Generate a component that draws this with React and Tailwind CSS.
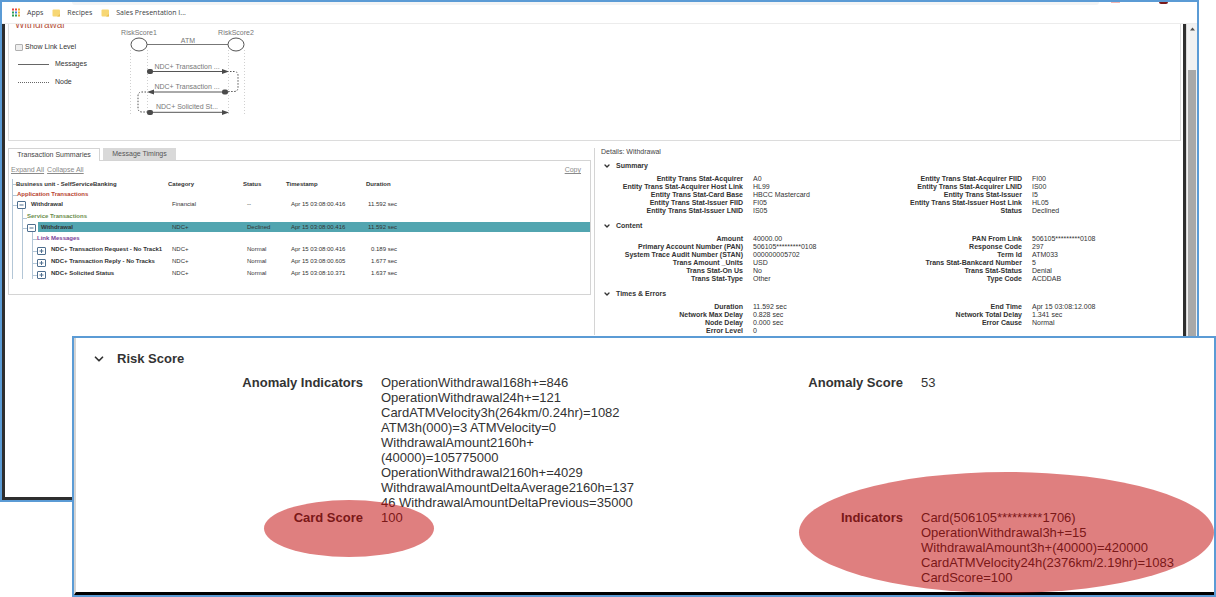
import { ChevronDown } from 'lucide-react';

const bookmarks = ['Recipes', 'Sales Presentation I...'];

const detailSections = [
  {
    title: 'Summary',
    left: [
      ['Entity Trans Stat-Acquirer', 'A0'],
      ['Entity Trans Stat-Acquirer Host Link', 'HL99'],
      ['Entity Trans Stat-Card Base', 'HBCC Mastercard'],
      ['Entity Trans Stat-Issuer FIID', 'FI05'],
      ['Entity Trans Stat-Issuer LNID', 'IS05'],
    ],
    right: [
      ['Entity Trans Stat-Acquirer FIID', 'FI00'],
      ['Entity Trans Stat-Acquirer LNID', 'IS00'],
      ['Entity Trans Stat-Issuer', 'I5'],
      ['Entity Trans Stat-Issuer Host Link', 'HL05'],
      ['Status', 'Declined'],
    ],
  },
  {
    title: 'Content',
    left: [
      ['Amount', '40000.00'],
      ['Primary Account Number (PAN)', '506105*********0108'],
      ['System Trace Audit Number (STAN)', '000000005702'],
      ['Trans Amount _Units', 'USD'],
      ['Trans Stat-On Us', 'No'],
      ['Trans Stat-Type', 'Other'],
    ],
    right: [
      ['PAN From Link', '506105*********0108'],
      ['Response Code', '297'],
      ['Term Id', 'ATM033'],
      ['Trans Stat-Bankcard Number', '5'],
      ['Trans Stat-Status', 'Denial'],
      ['Type Code', 'ACDDAB'],
    ],
  },
  {
    title: 'Times & Errors',
    left: [
      ['Duration', '11.592 sec'],
      ['Network Max Delay', '0.828 sec'],
      ['Node Delay', '0.000 sec'],
      ['Error Level', '0'],
    ],
    right: [
      ['End Time', 'Apr 15 03:08:12.008'],
      ['Network Total Delay', '1.341 sec'],
      ['Error Cause', 'Normal'],
    ],
  },
];

// heading rows only carry a coloured group name
const rows = [
  { level: 1, heading: 'Application Transactions', color: 'text-[#b8432f]', height: 'h-[10px]' },
  { level: 1, name: 'Withdrawal', open: true, cells: ['Financial', '--', 'Apr 15 03:08:00.416', '11.592 sec'], height: 'h-[10px]' },
  { level: 2, heading: 'Service Transactions', color: 'text-[#6b8e4e]', height: 'h-[13px]' },
  { level: 2, name: 'Withdrawal', open: true, selected: true, cells: ['NDC+', 'Declined', 'Apr 15 03:08:00.416', '11.592 sec'], height: 'h-[10px]' },
  { level: 3, heading: 'Link Messages', color: 'text-[#7b3f98]', height: 'h-[11px]' },
  { level: 3, name: 'NDC+ Transaction Request - No Track1', cells: ['NDC+', 'Normal', 'Apr 15 03:08:00.416', '0.189 sec'], height: 'h-[12px]' },
  { level: 3, name: 'NDC+ Transaction Reply - No Tracks', cells: ['NDC+', 'Normal', 'Apr 15 03:08:00.605', '1.677 sec'], height: 'h-[12px]' },
  { level: 3, name: 'NDC+ Solicited Status', cells: ['NDC+', 'Normal', 'Apr 15 03:08:10.371', '1.637 sec'], height: 'h-[12px]' },
];

function BookmarkBar() {
  return (
    <header className="relative flex h-[22px] items-center border-b border-[#ececec] pl-[9px] text-[7px] leading-[8px] text-[#3c4043] font-['Open_Sans','Noto_Sans',sans-serif]">
      {/* lower edge of the address bar and toolbar icons */}
      <div className="absolute top-0 left-[70px] right-[98px] h-[3px] rounded-b-full bg-[#f3f4f5]" />
      <div className="absolute top-0 right-[77px] h-px w-[9px] bg-[#f3b5b0]" />
      <div className="absolute top-0 right-[29px] h-[2px] w-[9px] rounded-b-full bg-[#7a1a1a]" />
      <a href="#apps" className="flex items-center gap-[6px]">
        <svg width="10" height="9" viewBox="0 0 10 9" aria-hidden="true">
          {['#e8453c', '#e8453c', '#f4a32a', '#2f9e57', '#3f7de0', '#f4b82a', '#2f9e57', '#2f9e57', '#e8a32a'].map((c, i) => (
            <rect key={i} x={(i % 3) * 3 + 1} y={Math.floor(i / 3) * 3 + 0.5} width="2" height="2" fill={c} />
          ))}
        </svg>
        Apps
      </a>
      {bookmarks.map(b => (
        <a key={b} href="#bookmark" className="ml-[9px] flex items-center gap-[6px]">
          <svg width="9" height="8" viewBox="0 0 9 8" aria-hidden="true">
            <rect x="0.5" y="0.5" width="7.5" height="7" rx="1" fill="#f7d774" />
            <path d="M5 7.5h3V5z" fill="#e8bf52" />
          </svg>
          {b}
        </a>
      ))}
    </header>
  );
}

function Diagram() {
  return (
    <svg width="150" height="96" viewBox="115 26 150 96" fill="none" className="text-[7px]" role="img" aria-label="Message flow">
      <g stroke="#d0d0d0" strokeDasharray="1 2">
        <path d="M130.5 50v64M147.5 50v64M228.5 50v64M244.5 50v64" />
      </g>
      <g stroke="#555555">
        <path d="M147 44.5h81" stroke="#777777" />
        <ellipse cx="139" cy="44.5" rx="8" ry="6.5" fill="#fff" />
        <ellipse cx="236" cy="44.5" rx="8" ry="6.5" fill="#fff" />
        <path d="M150 71.5h73M154 92h71M150 112.3h73" />
        <path d="M230 71.5h4q4 0 4 4v12q0 4-4 4h-6" strokeDasharray="1.5 1.5" />
        <path d="M146 92h-4q-4 0-4 4v12q0 4 4 4h6" strokeDasharray="1.5 1.5" />
      </g>
      <g fill="#4a4a4a">
        <rect x="147" y="69" width="6" height="5" rx="2" />
        <rect x="222" y="89.5" width="6" height="5" rx="2" />
        <rect x="147" y="110" width="6" height="5" rx="2" />
        <path d="M222 69l7 2.5-7 2.5zM154 89.5l-7 2.5 7 2.5zM222 110l7 2.5-7 2.5z" />
      </g>
      <g fill="#777777">
        <text x="139" y="35" textAnchor="middle">RiskScore1</text>
        <text x="236" y="35" textAnchor="middle">RiskScore2</text>
        <text x="188" y="43" textAnchor="middle">ATM</text>
        <text x="187" y="69" textAnchor="middle">NDC+ Transaction ...</text>
        <text x="187" y="89" textAnchor="middle">NDC+ Transaction ...</text>
        <text x="187" y="109" textAnchor="middle">NDC+ Solicited St...</text>
      </g>
    </svg>
  );
}

function OverviewPanel() {
  return (
    <section className="flex h-[117px] overflow-hidden border border-t-0 border-[#dcdcdc]">
      <div className="w-[106px] pl-[6px]">
        <h2 className="-mt-[4px] text-[10px] leading-[10px] text-[#b8573f]">Withdrawal</h2>
        <label className="mt-[13px] flex items-center gap-[2px]">
          <input type="checkbox" className="h-[7px] w-[8px] appearance-none rounded-[1px] border border-[#b0b0b0] bg-[#eeeeee]" />
          Show Link Level
        </label>
        <div className="mt-[9px] flex items-center gap-[6px] pl-[3px]">
          <span className="w-[31px] border-t border-[#666666]" />
          Messages
        </div>
        <div className="mt-[10px] flex items-center gap-[6px] pl-[3px]">
          <span className="w-[31px] border-t border-dotted border-[#666666]" />
          Node
        </div>
      </div>
      <div className="pt-[2px]">
        <Diagram />
      </div>
    </section>
  );
}

function Toggle({ open, label }) {
  return (
    <button type="button" aria-label={label} aria-expanded={!!open} className="shrink-0 self-end">
      <svg width="9" height="8" viewBox="0 0 9 8" fill="none" stroke="#4f6f8f">
        <rect x="0.5" y="0.5" width="8" height="7" rx="0.5" fill="#fff" />
        <path d={open ? 'M2.5 4h4' : 'M2.5 4h4M4.5 2v4'} />
      </svg>
    </button>
  );
}

function TreeRow({ row }) {
  const bg = row.selected ? 'bg-[#52a5b0]' : '';
  return (
    <tr className={row.height}>
      <td className="p-0" colSpan={row.heading ? 6 : 1}>
        <div className={`flex ${row.height}`}>
          {row.level > 1 && <span className="w-[10px] shrink-0 border-l border-[#b3c6d6]" />}
          {row.level > 2 && <span className="w-[10px] shrink-0 border-l border-[#b3c6d6]" />}
          <span className="flex w-[5px] shrink-0 items-end border-l border-[#b3c6d6] pb-[3px]">
            <span className="w-full border-t border-[#b3c6d6]" />
          </span>
          {row.heading ? (
            <span className={`self-center font-bold ${row.color}`}>{row.heading}</span>
          ) : (
            <>
              <Toggle open={row.open} label={row.name} />
              <span className={`ml-[2px] flex flex-1 items-center pl-[3px] font-bold whitespace-nowrap ${bg}`}>{row.name}</span>
            </>
          )}
        </div>
      </td>
      {row.cells && (
        <>
          <td className={`p-0 pl-[4px] ${bg}`}>{row.cells[0]}</td>
          <td className={`p-0 pl-[4px] ${bg}`}>{row.cells[1]}</td>
          <td className={`p-0 pl-[5px] ${bg}`}>{row.cells[2]}</td>
          <td className={`p-0 text-right whitespace-nowrap ${bg}`}>{row.cells[3]}</td>
          <td className={`p-0 ${bg}`} />
        </>
      )}
    </tr>
  );
}

function TransactionPanel() {
  return (
    <section className="w-[583px] shrink-0">
      <div role="tablist" className="flex gap-[3px]">
        <button type="button" role="tab" aria-selected="true" className="relative z-10 -mb-px h-[13px] w-[92px] border border-b-0 border-[#d4d4d4] bg-white text-[#444444]">
          Transaction Summaries
        </button>
        <button type="button" role="tab" aria-selected="false" className="h-[12px] w-[73px] bg-[#d9d9d9] text-[#555555]">
          Message Timings
        </button>
      </div>
      <div className="border border-[#d4d4d4] pt-[5px] pb-[15px]">
        <div className="flex gap-[3px] pr-[9px] pl-[2px] text-[#8a8a8a]">
          <button type="button" className="underline">Expand All</button>
          <button type="button" className="underline">Collapse All</button>
          <button type="button" className="ml-auto underline">Copy</button>
        </div>
        <div className="mt-[5px] pl-[3px]">
          <table className="w-full table-fixed border-collapse text-left text-[6px] leading-[8px]">
            <colgroup>
              <col className="w-[156px]" />
              <col className="w-[75px]" />
              <col className="w-[43px]" />
              <col className="w-[80px]" />
              <col className="w-[31px]" />
              <col />
            </colgroup>
            <thead>
              <tr className="h-[10px]">
                <th className="p-0">
                  <div className="flex h-[10px] items-center border-l border-[#b3c6d6]">
                    <span className="w-[3px] border-t border-[#b3c6d6]" />
                    Business unit - SelfServiceBanking
                  </div>
                </th>
                <th className="p-0">Category</th>
                <th className="p-0">Status</th>
                <th className="p-0">Timestamp</th>
                <th className="p-0">Duration</th>
                <th className="p-0" />
              </tr>
            </thead>
            <tbody>
              {rows.map((r, i) => <TreeRow key={i} row={r} />)}
            </tbody>
          </table>
        </div>
      </div>
    </section>
  );
}

function DetailList({ items }) {
  return (
    <dl>
      {items.map(([label, value]) => (
        <div key={label} className="flex gap-[10px]">
          <dt className="w-[148px] shrink-0 text-right font-bold">{label}</dt>
          <dd>{value}</dd>
        </div>
      ))}
    </dl>
  );
}

function DetailsPanel() {
  return (
    <section className="ml-[3px] flex-1 border-l border-[#d4d4d4] pr-[28px]">
      <h2 className="pl-[6px] leading-[7px] text-[#444444]">Details: Withdrawal</h2>
      {detailSections.map(s => (
        <div key={s.title} className="mt-[7px]">
          <button type="button" className="flex items-center gap-[5px] pl-[8px] font-bold">
            <ChevronDown size={8} strokeWidth={4} />
            {s.title}
          </button>
          <div className="mt-[5px] grid grid-cols-2">
            <DetailList items={s.left} />
            <DetailList items={s.right} />
          </div>
        </div>
      ))}
    </section>
  );
}

function BrowserWindow() {
  return (
    <div className="mr-[17px] border-2 border-[#5b9bd5] bg-white">
      <BookmarkBar />
      <div className="flex">
        <main className="flex-1 border-r-[3px] border-b-[3px] border-l-[3px] border-[#2e2e2e] pr-[2px] pb-[162px] pl-[3px] text-[7px] leading-[8px]">
          <OverviewPanel />
          <div className="mt-[7px] flex">
            <TransactionPanel />
            <DetailsPanel />
          </div>
        </main>
        <div className="flex w-[11px] flex-col items-center border-l border-[#d8d8d8] bg-[#f1f1f1]">
          <svg width="5" height="4" viewBox="0 0 5 4" className="mt-[3px] mb-[39px] shrink-0" aria-hidden="true">
            <path d="M0 3.5L2.5 0.5 5 3.5z" fill="#505050" />
          </svg>
          <div className="w-[8px] flex-1 bg-[#a8a8a8]" />
        </div>
      </div>
    </div>
  );
}

function ScoreRow({ label, children }) {
  return (
    <div className="flex gap-[18px]">
      <dt className="w-[287px] shrink-0 text-right font-bold">{label}</dt>
      <dd className="whitespace-nowrap">{children}</dd>
    </div>
  );
}

function RiskScoreCallout() {
  return (
    <section className="absolute top-[336px] right-0 left-[72px] border-2 border-[#5b9bd5] bg-white text-[13px] leading-[15px]">
      <div className="border-b-[3px] border-l-2 border-b-black border-l-[#d4d4d4] pt-[13px] pb-[7px]">
        <button type="button" className="flex items-center gap-[11px] pl-[16px] font-bold">
          <ChevronDown size={14} strokeWidth={3} />
          Risk Score
        </button>
        <dl className="mt-[9px] grid grid-cols-2 pr-[58px]">
          <ScoreRow label="Anomaly Indicators">
            OperationWithdrawal168h+=846<br />
            OperationWithdrawal24h+=121<br />
            CardATMVelocity3h(264km/0.24hr)=1082<br />
            ATM3h(000)=3 ATMVelocity=0<br />
            WithdrawalAmount2160h+<br />
            (40000)=105775000<br />
            OperationWithdrawal2160h+=4029<br />
            WithdrawalAmountDeltaAverage2160h=137<br />
            46 WithdrawalAmountDeltaPrevious=35000
          </ScoreRow>
          <ScoreRow label="Anomaly Score">53</ScoreRow>
          <ScoreRow label="Card Score">100</ScoreRow>
          <ScoreRow label="Indicators">
            Card(506105*********1706)<br />
            OperationWithdrawal3h+=15<br />
            WithdrawalAmount3h+(40000)=420000<br />
            CardATMVelocity24h(2376km/2.19hr)=1083<br />
            CardScore=100
          </ScoreRow>
        </dl>
      </div>
      {/* highlight marks over the two scores */}
      <div className="pointer-events-none absolute bottom-[38px] left-[190px] h-[57px] w-[170px] rounded-[50%] bg-[#c00000]/50" />
      <div className="pointer-events-none absolute right-0 bottom-[2px] h-[121px] w-[415px] rounded-[50%] bg-[#c00000]/50" />
    </section>
  );
}

export default function App() {
  return (
    <div className="relative min-h-screen overflow-hidden bg-white text-[#333333] font-['Liberation_Sans',Arial,sans-serif]">
      <BrowserWindow />
      <RiskScoreCallout />
    </div>
  );
}
